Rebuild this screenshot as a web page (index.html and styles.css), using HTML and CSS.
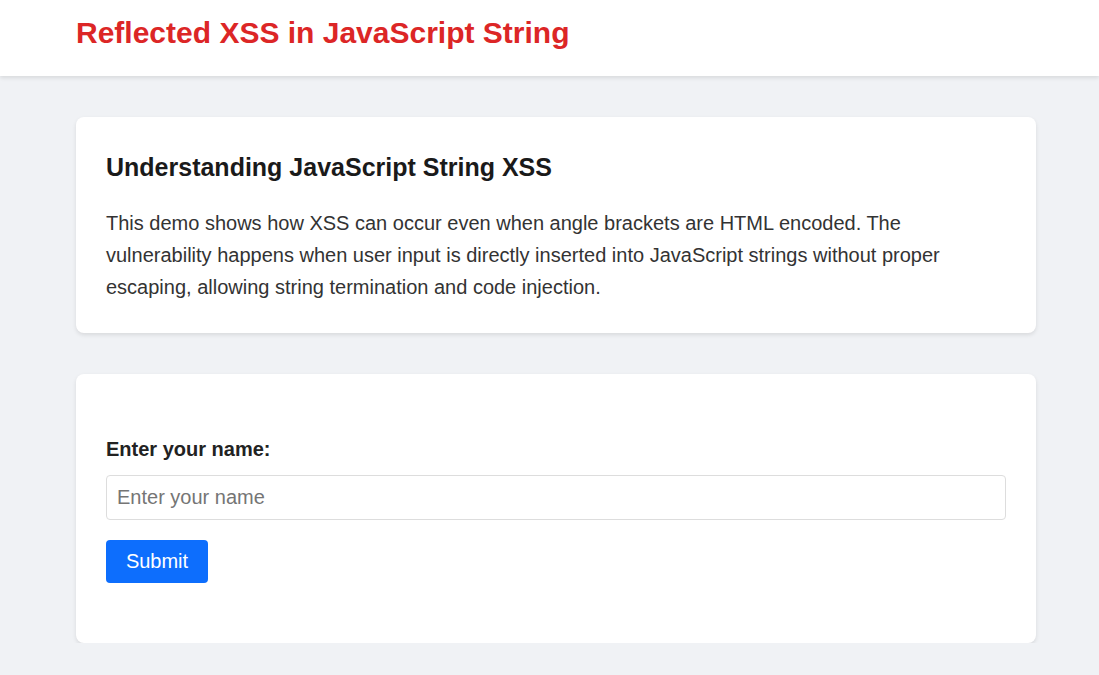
FILE: index.html
```html
<!DOCTYPE html>
<html lang="en">
<head>
<meta charset="utf-8">
<title>Reflected XSS in JavaScript String</title>
<link rel="stylesheet" href="styles.css">
</head>
<body>
<header class="site-header">
  <div class="wrap">
    <h1 class="title">Reflected XSS in JavaScript String</h1>
  </div>
</header>
<main class="wrap main">
  <section class="card">
    <h2 class="card-title">Understanding JavaScript String XSS</h2>
    <p class="card-text">This demo shows how XSS can occur even when angle brackets are HTML encoded. The vulnerability happens when user input is directly inserted into JavaScript strings without proper escaping, allowing string termination and code injection.</p>
  </section>
  <section class="card form-card">
    <form class="form">
      <label class="label" for="name">Enter your name:</label>
      <input class="input" id="name" type="text" placeholder="Enter your name">
      <button class="btn" type="button">Submit</button>
    </form>
  </section>
</main>
</body>
</html>
```
FILE: styles.css
```css
* { box-sizing: border-box; }
html, body { margin: 0; padding: 0; }
body {
  background: #f0f2f5;
  font-family: "Liberation Sans", Arial, sans-serif;
  color: #333;
}
.wrap {
  width: 960px;
  margin-left: 76px;
}
.site-header {
  background: #fff;
  height: 76px;
  box-shadow: 0 2px 4px rgba(0,0,0,0.1);
  display: flex;
  align-items: center;
}
.title {
  margin: 0;
  font-size: 30px;
  font-weight: bold;
  color: #dc2626;
  line-height: 1.2;
  padding-bottom: 10px;
}
.main {
  padding-top: 41px;
  display: flex;
  flex-direction: column;
  gap: 41px;
}
.card {
  background: #fff;
  border-radius: 8px;
  box-shadow: 0 2px 4px rgba(0,0,0,0.1);
  padding: 30px;
}
.card-title {
  margin: 5px 0 0;
  font-size: 25px;
  font-weight: bold;
  color: #1a1a1a;
  line-height: 1.2;
}
.card-text {
  margin: 25px 0 0;
  font-size: 20px;
  line-height: 32px;
  color: #333;
}
.form-card {
  padding-top: 63px;
  padding-bottom: 60px;
}
.form {
  display: flex;
  flex-direction: column;
  align-items: flex-start;
}
.label {
  font-size: 20px;
  font-weight: bold;
  color: #222;
  line-height: 24px;
}
.input {
  margin-top: 14px;
  width: 100%;
  height: 45px;
  border: 1px solid #ddd;
  border-radius: 4px;
  padding: 0 10px;
  font-size: 20px;
  font-family: "Liberation Sans", Arial, sans-serif;
  color: #333;
}
.input::placeholder { color: #757575; }
.btn {
  margin-top: 20px;
  width: 102px;
  height: 43px;
  background: #0d6efd;
  color: #fff;
  border: none;
  border-radius: 4px;
  font-size: 20px;
  font-family: "Liberation Sans", Arial, sans-serif;
}
```
